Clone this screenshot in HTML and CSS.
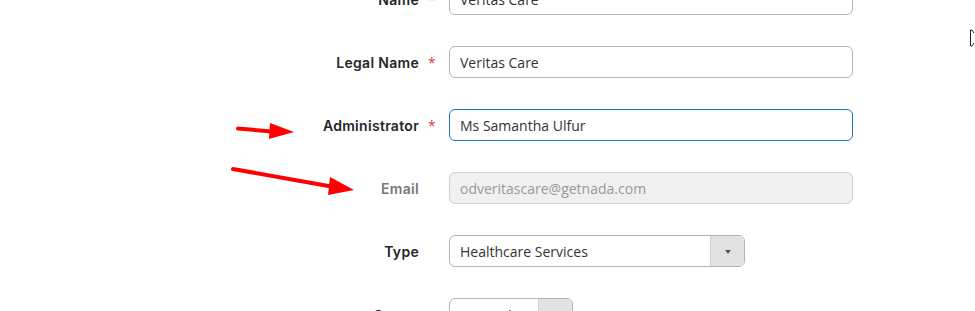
FILE: index.html
```html
<!DOCTYPE html>
<html>
<head>
<meta charset="utf-8">
<link rel="stylesheet" href="styles.css">
</head>
<body>
<div class="page">
  <form class="form">
    <div class="row">
      <label class="label">Name</label>
      <span class="req">*</span>
      <div class="input">Veritas Care</div>
    </div>
    <div class="row">
      <label class="label">Legal Name</label>
      <span class="req">*</span>
      <div class="input">Veritas Care</div>
    </div>
    <div class="row">
      <label class="label">Administrator</label>
      <span class="req">*</span>
      <div class="input focus">Ms Samantha Ulfur</div>
    </div>
    <div class="row">
      <label class="label muted">Email</label>
      <span class="req"></span>
      <div class="input disabled">odveritascare@getnada.com</div>
    </div>
    <div class="row">
      <label class="label">Type</label>
      <span class="req"></span>
      <div class="select type">
        <span class="select-text">Healthcare Services</span>
        <span class="select-btn"><span class="tri"></span></span>
      </div>
    </div>
    <div class="row last">
      <label class="label">Status</label>
      <span class="req"></span>
      <div class="select status">
        <span class="select-text">General</span>
        <span class="select-btn"><span class="tri"></span></span>
      </div>
    </div>
  </form>

  <svg class="arrow arrow1" width="70" height="24" viewBox="0 0 70 24">
    <path d="M2 9.5 L36 12.5" stroke="#ff0000" stroke-width="4" stroke-linecap="round" fill="none"/>
    <path d="M34 4 L58 13 L33 20 Z" fill="#ff0000"/>
  </svg>
  <svg class="arrow arrow2" width="130" height="34" viewBox="0 0 130 34">
    <path d="M3 4 L104 22" stroke="#ff0000" stroke-width="4" stroke-linecap="round" fill="none"/>
    <path d="M100 12 L124 25 L98 30 Z" fill="#ff0000"/>
  </svg>
  <svg class="cursor" width="8" height="20" viewBox="0 0 8 20">
    <path d="M1.5 1 L1.5 17 M1.5 1 L3 1 L5 4 M1.5 17 L3 17 L5 14" stroke="#222" stroke-width="1" fill="none"/>
  </svg>
</div>
</body>
</html>
```
FILE: styles.css
```css
* { box-sizing: border-box; }
html, body {
  margin: 0;
  padding: 0;
  background: #ffffff;
  overflow: hidden;
}
.page {
  position: relative;
  width: 975px;
  height: 311px;
  overflow: hidden;
}
.form {
  display: flex;
  flex-direction: column;
  gap: 31px;
  margin-top: -17px;
}
.row {
  display: flex;
  align-items: center;
  height: 32px;
}
.label {
  width: 419px;
  text-align: right;
  font-family: "Inter", "Lato", sans-serif;
  font-weight: 600;
  font-size: 14px;
  color: #262626;
  letter-spacing: 0.3px;
}
.label.muted {
  color: #777777;
}
.row.last .label {
  padding-top: 3px;
}
.row.last .select-text {
  padding-top: 2px;
}
.req {
  width: 30px;
  padding-left: 9px;
  font-family: "Open Sans", sans-serif;
  font-size: 14px;
  color: #e53935;
  align-self: center;
  line-height: 1;
  padding-top: 2px;
}
.input {
  width: 404px;
  height: 32px;
  border: 1px solid #b3b3b3;
  border-radius: 6px;
  padding: 0 10px;
  display: flex;
  align-items: center;
  font-family: "Open Sans", sans-serif;
  font-size: 14px;
  color: #333333;
  background: #fff;
}
.input.focus {
  border: 1.5px solid #1b74c9;
}
.input.disabled {
  background: #f0f0f0;
  border-color: #d0d0d0;
  color: #9a9a9a;
}
.select {
  height: 32px;
  border: 1px solid #b3b3b3;
  border-radius: 6px;
  display: flex;
  align-items: stretch;
  overflow: hidden;
  font-family: "Open Sans", sans-serif;
  font-size: 14px;
  color: #333333;
}
.select.type { width: 296px; }
.select.status { width: 124px; }
.select-text {
  flex: 1;
  display: flex;
  align-items: center;
  padding-left: 10px;
  white-space: nowrap;
  overflow: hidden;
}
.select-btn {
  width: 34px;
  background: #e2e2e2;
  border-left: 1px solid #d0d0d0;
  display: flex;
  align-items: center;
  justify-content: center;
}
.tri {
  width: 0;
  height: 0;
  border-left: 3.5px solid transparent;
  border-right: 3.5px solid transparent;
  border-top: 4px solid #555;
  margin-top: 1px;
}
.arrow {
  position: absolute;
}
.arrow1 {
  left: 236px;
  top: 119px;
}
.arrow2 {
  left: 230px;
  top: 165px;
}
.cursor {
  position: absolute;
  left: 969px;
  top: 29px;
}
```
